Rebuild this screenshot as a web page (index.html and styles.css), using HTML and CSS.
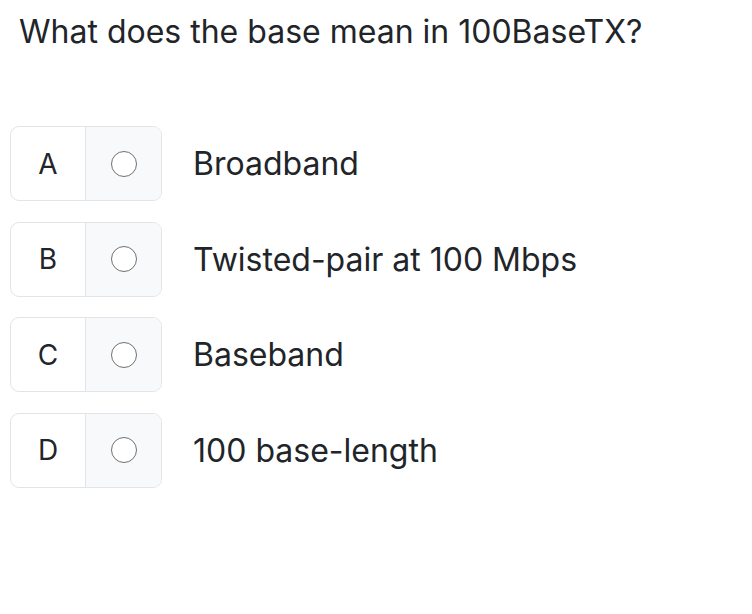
FILE: index.html
```html
<!DOCTYPE html>
<html>
<head>
<meta charset="utf-8">
<link rel="stylesheet" href="styles.css">
</head>
<body>
<div class="question">What does the base mean in 100BaseTX?</div>
<div class="options">
  <div class="option">
    <div class="choice"><span class="letter">A</span><span class="radio-cell"><span class="radio"></span></span></div>
    <div class="label">Broadband</div>
  </div>
  <div class="option">
    <div class="choice"><span class="letter">B</span><span class="radio-cell"><span class="radio"></span></span></div>
    <div class="label">Twisted-pair at 100 Mbps</div>
  </div>
  <div class="option">
    <div class="choice"><span class="letter">C</span><span class="radio-cell"><span class="radio"></span></span></div>
    <div class="label">Baseband</div>
  </div>
  <div class="option">
    <div class="choice"><span class="letter">D</span><span class="radio-cell"><span class="radio"></span></span></div>
    <div class="label">100 base-length</div>
  </div>
</div>
</body>
</html>
```
FILE: styles.css
```css
body {
  margin: 0;
  background: #fff;
  font-family: Inter, "Noto Sans", sans-serif;
  color: #212529;
}
.question {
  font-size: 32px;
  line-height: 40px;
  padding: 12px 0 0 19px;
}
.options {
  display: flex;
  flex-direction: column;
  gap: 20.5px;
  padding: 74px 0 0 10px;
}
.option {
  display: flex;
  align-items: center;
  gap: 31px;
}
.choice {
  display: flex;
  width: 152px;
  height: 75px;
  border: 1.5px solid #e1e4e8;
  border-radius: 9px;
  overflow: hidden;
  box-sizing: border-box;
}
.letter {
  width: 74px;
  display: flex;
  align-items: center;
  justify-content: center;
  font-size: 28px;
  border-right: 1.5px solid #e1e4e8;
}
.radio-cell {
  flex: 1;
  display: flex;
  align-items: center;
  justify-content: center;
  background: #f8f9fa;
}
.radio {
  width: 26px;
  height: 26px;
  border: 1.75px solid #707070;
  border-radius: 50%;
  box-sizing: border-box;
  background: #fff;
}
.label {
  font-size: 32px;
}
```
